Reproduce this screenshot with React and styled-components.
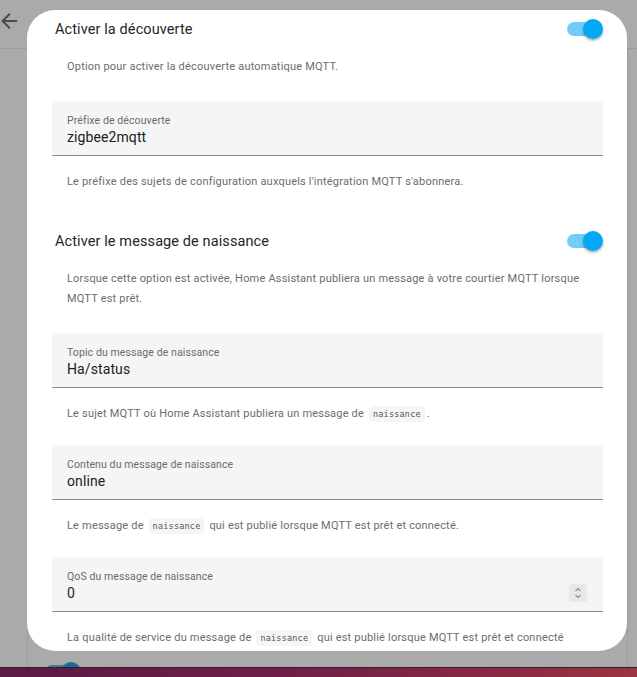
import React from "react";
import styled, { createGlobalStyle } from "styled-components";

const GlobalStyle = createGlobalStyle`
    html, body {
        margin: 0;
        padding: 0;
        height: 100%;
        overflow: hidden;
    }
    body {
        background-color: #aaaaaa;
        font-family: Roboto, "Noto Sans", sans-serif;
        -webkit-font-smoothing: antialiased;
    }
`;

const Page = styled.div`
    position: relative;
    height: 677px;
    display: grid;
    grid-template-rows: 49px 1fr 10px;
    background-color: #aaaaaa;
`;

const Header = styled.div`
    display: flex;
    align-items: center;
    border-bottom: 1px solid #9b9b9b;
    padding-bottom: 6px;
    svg {
        margin-left: -3px;
        width: 24px;
        height: 24px;
        fill: #4b4b4b;
    }
`;

const Behind = styled.div`
    display: flex;
    justify-content: flex-start;
    padding-left: 27px;
    overflow: hidden;
`;

const BehindCard = styled.div`
    width: 599px;
    border-left: 1px solid #9d9d9d;
    border-right: 1px solid #9d9d9d;
    display: flex;
    flex-direction: column;
    justify-content: flex-end;
`;

const BehindRow = styled.div`
    display: flex;
    align-items: center;
    gap: 16px;
    padding-left: 17px;
    margin-bottom: -16px;
    height: 22px;
    span {
        font-size: 15px;
        line-height: 22px;
        color: #2e2e2e;
        transform: translateY(3px);
    }
`;

const BehindTrack = styled.div`
    position: relative;
    width: 30px;
    height: 14px;
    border-radius: 7px;
    background-color: #3f7ea3;
    &::after {
        content: "";
        position: absolute;
        right: -6px;
        top: -3px;
        width: 20px;
        height: 20px;
        border-radius: 50%;
        background-color: #1a6b9b;
    }
`;

const Wallpaper = styled.div`
    position: relative;
    z-index: 1;
    border-top: 1px solid #3b1630;
    background: linear-gradient(90deg, #5a1b44 0%, #6f1f47 45%, #8a2b43 80%, #9c3442 100%);
`;

const Dialog = styled.div`
    position: absolute;
    z-index: 2;
    left: 27px;
    top: 10px;
    width: 600px;
    height: 641px;
    background-color: #ffffff;
    border-radius: 28px;
    overflow: hidden;
    box-sizing: border-box;
    padding: 0 24px 0 25px;
`;

const SwitchRow = styled.div`
    display: flex;
    align-items: center;
    justify-content: space-between;
    height: 38px;
    margin-top: ${(p) => p.$top || 0}px;
    padding-left: 3px;
    span {
        font-size: 14.5px;
        color: #262626;
        letter-spacing: 0.1px;
    }
`;

const Track = styled.div`
    position: relative;
    width: 30px;
    height: 14px;
    border-radius: 7px;
    background-color: #71ccf8;
    margin-right: 6px;
    &::after {
        content: "";
        position: absolute;
        right: -6px;
        top: -3px;
        width: 20px;
        height: 20px;
        border-radius: 50%;
        background-color: #03a9f4;
        box-shadow: 0 2px 2px rgba(0, 0, 0, 0.22), 0 1px 4px rgba(0, 0, 0, 0.1);
    }
`;

const Description = styled.div`
    margin-top: 9px;
    padding: 0 16px 0 15px;
    font-size: 11px;
    line-height: 20px;
    letter-spacing: 0.2px;
    color: #6c6c6c;
`;

const Field = styled.div`
    position: relative;
    height: 55px;
    margin-top: ${(p) => p.$top}px;
    box-sizing: border-box;
    background-color: #f5f5f5;
    border-radius: 4px 4px 0 0;
    border-bottom: 1px solid #8c8c8c;
    padding: 13px 16px 0 15px;
    display: flex;
    align-items: flex-start;
    justify-content: space-between;
`;

const FieldText = styled.div`
    display: flex;
    flex-direction: column;
`;

const Label = styled.div`
    font-size: 10.5px;
    line-height: 13px;
    letter-spacing: 0.1px;
    color: #6b6b6b;
`;

const Value = styled.div`
    font-size: 14px;
    line-height: 20px;
    letter-spacing: 0.1px;
    color: #212121;
`;

const Spinner = styled.div`
    margin-top: 14px;
    width: 18px;
    height: 18px;
    border-radius: 2px;
    background-color: #e9e9ed;
    display: flex;
    align-items: center;
    justify-content: center;
    svg {
        width: 10px;
        height: 14px;
        stroke: #8a8a8a;
        fill: none;
        stroke-width: 1.1;
    }
`;

const Helper = styled.div`
    margin-top: 16px;
    padding: 0 16px 0 15px;
    font-size: 11px;
    line-height: 20px;
    letter-spacing: 0.2px;
    color: #6c6c6c;
    white-space: nowrap;
`;

const Code = styled.code`
    font-family: "DejaVu Sans Mono", "Liberation Mono", monospace;
    font-size: 8.5px;
    letter-spacing: 0.2px;
    color: #555555;
    background-color: #f5f5f5;
    border-radius: 4px;
    padding: 3px 4px;
    margin: 0 2px;
`;

const BackArrow = () => (
    <svg viewBox="0 0 24 24">
        <path d="M20,11V13H8L13.5,18.5L12.08,19.92L4.16,12L12.08,4.08L13.5,5.5L8,11H20Z" />
    </svg>
);

const Chevrons = () => (
    <svg viewBox="0 0 10 14">
        <path d="M2.5 5 L5 2.5 L7.5 5" />
        <path d="M2.5 9 L5 11.5 L7.5 9" />
    </svg>
);

export default function App() {
    return (
        <>
            <GlobalStyle />
            <Page>
                <Header>
                    <BackArrow />
                </Header>
                <Behind>
                    <BehindCard>
                        <BehindRow>
                            <BehindTrack />
                            <span>Activer la découverte</span>
                        </BehindRow>
                    </BehindCard>
                </Behind>
                <Wallpaper />

                <Dialog>
                    <SwitchRow>
                        <span>Activer la découverte</span>
                        <Track />
                    </SwitchRow>
                    <Description>Option pour activer la découverte automatique MQTT.</Description>

                    <Field $top={24}>
                        <FieldText>
                            <Label>Préfixe de découverte</Label>
                            <Value>zigbee2mqtt</Value>
                        </FieldText>
                    </Field>
                    <Helper>
                        Le préfixe des sujets de configuration auxquels l'intégration MQTT s'abonnera.
                    </Helper>

                    <SwitchRow $top={30}>
                        <span>Activer le message de naissance</span>
                        <Track />
                    </SwitchRow>
                    <Description>
                        Lorsque cette option est activée, Home Assistant publiera un message à votre courtier MQTT lorsque
                        MQTT est prêt.
                    </Description>

                    <Field $top={24}>
                        <FieldText>
                            <Label>Topic du message de naissance</Label>
                            <Value>Ha/status</Value>
                        </FieldText>
                    </Field>
                    <Helper>
                        Le sujet MQTT où Home Assistant publiera un message de <Code>naissance</Code>.
                    </Helper>

                    <Field $top={21}>
                        <FieldText>
                            <Label>Contenu du message de naissance</Label>
                            <Value>online</Value>
                        </FieldText>
                    </Field>
                    <Helper>
                        Le message de <Code>naissance</Code> qui est publié lorsque MQTT est prêt et connecté.
                    </Helper>

                    <Field $top={21}>
                        <FieldText>
                            <Label>QoS du message de naissance</Label>
                            <Value>0</Value>
                        </FieldText>
                        <Spinner>
                            <Chevrons />
                        </Spinner>
                    </Field>
                    <Helper>
                        La qualité de service du message de <Code>naissance</Code> qui est publié lorsque MQTT est prêt et connecté
                    </Helper>
                </Dialog>
            </Page>
        </>
    );
}
